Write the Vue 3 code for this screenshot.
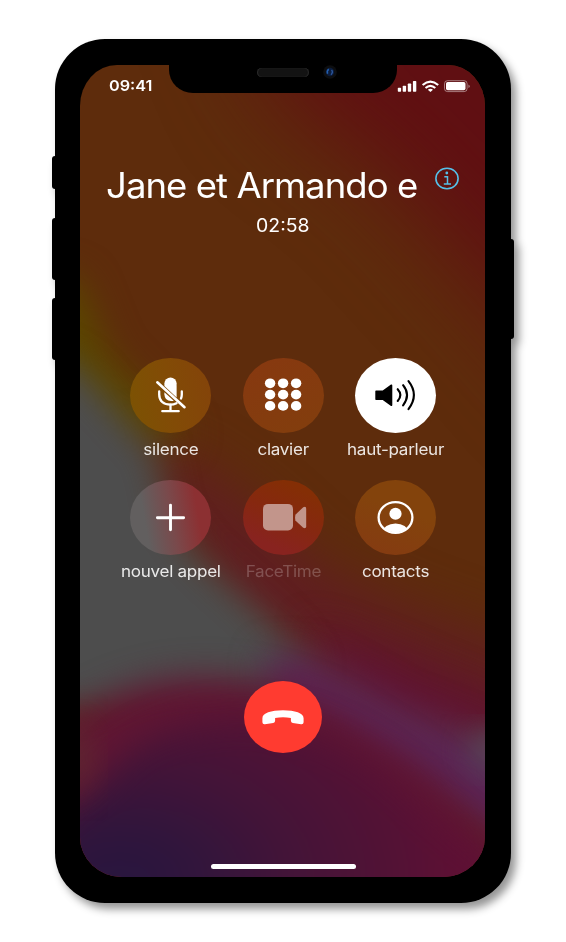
<script setup>
const actions = [
  { id: 'mute', label: 'silence' },
  { id: 'keypad', label: 'clavier' },
  { id: 'speaker', label: 'haut-parleur' },
  { id: 'add', label: 'nouvel appel' },
  { id: 'facetime', label: 'FaceTime' },
  { id: 'contacts', label: 'contacts' },
]
const dots = [-13, 0, 13].flatMap((x) => [-11.3, 0, 11.3].map((y) => ({ x, y })))
</script>

<template>
  <main class="page">
    <div class="phone">
      <i class="side side-switch"></i>
      <i class="side side-up"></i>
      <i class="side side-down"></i>
      <i class="side side-power"></i>

      <div class="screen">
        <svg class="wallpaper" viewBox="0 0 405 812" aria-hidden="true">
          <defs>
            <filter id="soft" x="-50%" y="-50%" width="200%" height="200%" color-interpolation-filters="sRGB"><feGaussianBlur stdDeviation="17" /></filter>
            <filter id="softer" x="-60%" y="-60%" width="220%" height="220%" color-interpolation-filters="sRGB"><feGaussianBlur stdDeviation="26" /></filter>
            <filter id="haze" x="-80%" y="-80%" width="260%" height="260%" color-interpolation-filters="sRGB"><feGaussianBlur stdDeviation="48" /></filter>
            <radialGradient id="pool" gradientUnits="userSpaceOnUse" cx="0" cy="0" r="340" gradientTransform="translate(40 815) scale(1 0.68)">
              <stop offset="0" stop-color="#27163f" />
              <stop offset="0.22" stop-color="#30153c" />
              <stop offset="0.5" stop-color="#431438" />
              <stop offset="0.8" stop-color="#521235" />
              <stop offset="1" stop-color="#5e1034" />
            </radialGradient>
          </defs>
          <rect width="405" height="812" fill="#5e2c0c" />
          <path d="M140-110H520V350L410 225L300 105L200 30Z" fill="#600f12" filter="url(#haze)" />
          <path d="M-60 200L0 215L30 290L110 370L60 400L-60 340Z" fill="#5b4600" filter="url(#soft)" />
          <path d="M50 375L120 400L180 445L240 500L320 540L460 590V730L300 650L150 560Z" fill="#601e21" filter="url(#softer)" />
          <path d="M225 560L300 585L450 650V680L300 650Z" fill="#60142f" filter="url(#soft)" />
          <path d="M-60 275L0 305L48 358L76 388L88 450L120 493L195 560L232 605L190 650H-60Z" fill="#4d4d4d" filter="url(#soft)" />
          <path d="M185 590L235 592L320 640L450 690V790Q300 730 190 640Z" fill="#5b2656" filter="url(#soft)" />
          <ellipse cx="420" cy="685" rx="30" ry="18" fill="#55545c" filter="url(#soft)" />
          <path d="M-60 650L0 648Q70 605 150 613Q230 622 290 668Q350 700 390 745L470 830V900H-60Z" fill="#601633" filter="url(#soft)" />
          <path d="M-70 780Q-5 745 50 685Q100 650 180 652Q270 665 330 725L460 830V900H-70Z" fill="url(#pool)" filter="url(#soft)" />
          <ellipse cx="-8" cy="692" rx="18" ry="32" fill="#5f2a30" filter="url(#soft)" />
        </svg>

        <header class="status">
          <span class="clock"><span class="tx">09:41</span></span>
          <svg class="signals" width="74" height="14" viewBox="0 0 74 14" fill="#fff">
            <rect x="0.8" y="8.8" width="3.3" height="4" rx="0.7" />
            <rect x="5.7" y="6.8" width="3.4" height="6" rx="0.7" />
            <rect x="10.8" y="4.5" width="3.4" height="8.3" rx="0.7" />
            <rect x="15.9" y="2" width="3.4" height="10.8" rx="0.7" />
            <g fill="none" stroke="#fff" stroke-width="2.1">
              <path d="M25.6 6Q33.4-.8 41.2 6" />
              <path d="M28.5 9Q33.4 4.6 38.3 9" />
            </g>
            <path d="M30.8 10.8Q33.4 8.7 36 10.800L33.400 13Z" />
            <rect x="47.5" y="1.7" width="22.6" height="10.9" rx="3" fill="none" stroke="#fff" stroke-opacity="0.5" stroke-width="0.9" />
            <rect x="49" y="3.1" width="19.5" height="8.1" rx="1.7" />
            <path d="M71.5 5.500Q74 7.300 71.500 9.100Z" opacity="0.55" />
          </svg>
        </header>

        <section class="caller">
          <h1 class="name"><span class="tx">Jane et Armando e</span></h1>
          <svg class="info" width="24" height="23" viewBox="0 0 24 23" fill="none" stroke="#55c0e8">
            <ellipse cx="12" cy="11.5" rx="11.1" ry="10.3" stroke-width="1.6" />
            <circle cx="11.8" cy="6" r="1.4" fill="#55c0e8" stroke="none" />
            <path d="M9.3 9.7H12.5V16.8M8.8 17H16" stroke-width="1.5" />
          </svg>
        </section>
        <p class="timer"><span class="tx">02:58</span></p>

        <section class="grid">
          <div v-for="a in actions" :key="a.id" class="action" :class="a.id">
            <button class="disc" :aria-label="a.label">
              <svg width="81" height="75" viewBox="-40.5 -37.5 81 75" fill="#fff">
                <g v-if="a.id === 'mute'" fill="none" stroke="#fff" stroke-width="2.3" stroke-linecap="round">
                  <path d="M-6.1-12.2A6.1 5.9 0 0 1 6.1-12.2V2L-6.1-9.4Z" fill="#fff" stroke="none" />
                  <path d="M-6.1-3.2L3.3 5.2Q-5.7 6.7-6.1-1Z" fill="#fff" stroke="none" />
                  <path d="M-11.3-4V-1C-11.3 6-6.5 9.2 0 9.2Q3 9.2 6 7.7M11.3-4V-1Q11.3 1.2 10.5 3" />
                  <path d="M0 9.2V15.4M-8.2 15.7H8.2" />
                  <path d="M-13.2-13.2L14 11.7" stroke-width="2.6" />
                </g>
                <g v-else-if="a.id === 'keypad'">
                  <ellipse v-for="(d, i) in dots" :key="i" :cx="d.x - 0.4" :cy="d.y - 0.9" rx="5.2" ry="4.9" />
                </g>
                <g v-else-if="a.id === 'speaker'" fill="none" stroke="#000" stroke-width="2.1" stroke-linecap="round">
                  <path d="M-19.5-5.1H-12.8L-4.5-11Q-3.2-11.5-3.2-10V9.6Q-3.2 11-4.5 10.4L-12.8 4.4H-19.5Q-20.2 4.4-20.2 3.7V-4.3Q-20.2-5.1-19.5-5.1Z" fill="#000" stroke="none" />
                  <path d="M2.2-6.3Q7.5-.5 2.2 5.5M7.6-10.3Q15.5-.5 7.6 9.8M13-14.3Q23.8-.5 13 13.6" />
                </g>
                <path v-else-if="a.id === 'add'" d="M0-12.4V12.3M-13.1.2H13.1" fill="none" stroke="#fff" stroke-width="2.9" stroke-linecap="round" />
                <g v-else-if="a.id === 'facetime'" fill="#c2958b">
                  <rect x="-20.5" y="-13.6" width="30" height="26.5" rx="5" />
                  <path d="M11.9-2.7L19.7-10.3Q22.700-11.800 22.700-8.800V8.700Q22.700 11.600 19.700 10.300L11.900 2.900Q11.300 0 11.900-2.700Z" />
                </g>
                <g v-else>
                  <clipPath id="badge"><ellipse rx="16.5" ry="15" /></clipPath>
                  <ellipse cx="0" cy="0" rx="16.9" ry="15.3" fill="none" stroke="#fff" stroke-width="2.3" />
                  <ellipse cx="0" cy="-3.7" rx="6.1" ry="6" />
                  <ellipse cx="0" cy="15" rx="12.8" ry="9.1" clip-path="url(#badge)" />
                </g>
              </svg>
            </button>
            <span class="label"><span class="tx">{{ a.label }}</span></span>
          </div>
        </section>

        <button class="hangup" aria-label="Raccrocher">
          <svg width="42" height="15" viewBox="0 0 42 15" fill="#fff">
            <path d="M.4 8.2C.4 3.1 9 .3 21 .3S41.6 3.1 41.6 8.2V12.2Q41.5 14.6 39.1 14.3L30.8 12.9Q28.9 12.5 28.9 10.7V8Q21 6.4 13.1 8V10.7Q13.1 12.5 11.2 12.9L2.9 14.3Q.5 14.6 .4 12.2Z" />
          </svg>
        </button>
        <div class="home"></div>
      </div>

      <div class="notch">
        <span class="earpiece"></span>
        <svg class="camera" width="14" height="14" viewBox="0 0 14 14">
          <circle cx="7" cy="7" r="6.8" fill="#0d0e10" />
          <circle cx="7" cy="7" r="4.2" fill="#0b1c3c" />
          <path d="M5.7 4.2Q3.5 6 4.6 8.7" stroke="#245fae" stroke-width="1.5" fill="none" />
          <path d="M8.5 5Q10.5 7 8 9.7" stroke="#2b569b" stroke-width="1.4" fill="none" />
        </svg>
      </div>
    </div>
  </main>
</template>

<style>
body {
  margin: 0;
  background: #fff;
}
</style>

<style scoped>
.page {
  box-sizing: border-box;
  width: 566px;
  height: 942px;
  padding: 39px 55px;
  overflow: hidden;
  font-family: Inter, "Liberation Sans", sans-serif;
  color: #fff;
}
.phone {
  position: relative;
  box-sizing: border-box;
  width: 456px;
  height: 864px;
  padding: 26px 26px 26px 25px;
  border-radius: 50px;
  background: #000;
  filter: drop-shadow(5px 6px 4px rgba(0, 0, 0, 0.42));
}
.side {
  position: absolute;
  left: -3px;
  width: 6px;
  border-radius: 3px;
  background: #000;
}
.side-switch { top: 117px; height: 33px; }
.side-up { top: 179px; height: 62px; }
.side-down { top: 259px; height: 62px; }
.side-power { left: 453px; top: 200px; height: 100px; }

.screen {
  position: relative;
  display: flex;
  flex-direction: column;
  width: 405px;
  height: 812px;
  border-radius: 37px 37px 42px 42px / 41px 41px 40px 40px;
  overflow: hidden;
  isolation: isolate;
}
.wallpaper {
  position: absolute;
  inset: 0;
  z-index: -1;
  width: 405px;
  height: 812px;
}
.tx {
  display: inline-block;
  white-space: nowrap;
}
.status {
  display: flex;
  justify-content: space-between;
  align-items: center;
  height: 42px;
  padding: 0 14px 0 28.5px;
}
.clock {
  font-size: 15px;
  font-weight: 600;
  line-height: 20px;
}
.clock .tx {
  transform: scaleX(1.08);
  transform-origin: left;
}
.caller {
  display: flex;
  justify-content: space-between;
  height: 49px;
  margin-top: 54px;
  padding: 0 26px;
}
.name {
  margin: 0;
  font-size: 35px;
  font-weight: 400;
  line-height: 49px;
}
.name .tx {
  letter-spacing: -0.9px;
  transform: scaleX(1.043);
  transform-origin: left;
}
.info {
  margin-top: 6px;
}
.timer {
  margin: 4px 0 0;
  font-size: 18px;
  line-height: 24px;
  text-align: center;
}
.timer .tx {
  transform: scaleX(1.08);
}
.grid {
  display: grid;
  grid-template-columns: repeat(3, 112.5px);
  justify-content: center;
  row-gap: 22.5px;
  margin-top: 119.5px;
  padding-left: 1px;
}
.action {
  display: flex;
  flex-direction: column;
  align-items: center;
  height: 100px;
}
.disc,
.hangup {
  display: flex;
  align-items: center;
  justify-content: center;
  padding: 0;
  border: 0;
  border-radius: 50%;
}
.disc {
  width: 81px;
  height: 75px;
}
.mute .disc { background: linear-gradient(80deg, #7c5203 5%, #824b06 50%, #84430a); }
.keypad .disc { background: linear-gradient(155deg, #873810, #823e0d); }
.speaker .disc { background: #fff; }
.add .disc { background: linear-gradient(80deg, #625f5f 22%, #7a494b 52%, #8c3032 80%); }
.facetime .disc { background: linear-gradient(205deg, #842e05 18%, #86280f 48%, #88231f 80%); }
.contacts .disc { background: linear-gradient(200deg, #83430c 40%, #853a12); }
.label {
  margin-top: 6.25px;
  font-size: 16px;
  line-height: 20px;
  color: rgba(255, 255, 255, 0.88);
}
.label .tx {
  letter-spacing: -0.25px;
  transform: scaleX(1.065);
}
.facetime .label {
  color: rgba(255, 255, 255, 0.22);
}
.hangup {
  align-self: center;
  width: 78px;
  height: 72px;
  margin: 101px 0 0 1px;
  background: #ff3b30;
}
.home {
  align-self: center;
  width: 145px;
  height: 5px;
  margin-top: 111px;
  margin-left: 2px;
  border-radius: 3px;
  background: #fff;
}
.notch {
  position: absolute;
  top: 26px;
  left: 114px;
  width: 228px;
  height: 28px;
  border-radius: 0 0 24px 24px / 0 0 23px 23px;
  background: #000;
}
.earpiece {
  position: absolute;
  left: 88px;
  top: 3px;
  width: 52px;
  height: 9px;
  border-radius: 5px;
  background: #131313;
  box-shadow: inset 1px 0 1px #2a2a2a, inset -1px 0 1px #2a2a2a;
}
.camera {
  position: absolute;
  left: 154px;
  top: 0;
}
</style>
